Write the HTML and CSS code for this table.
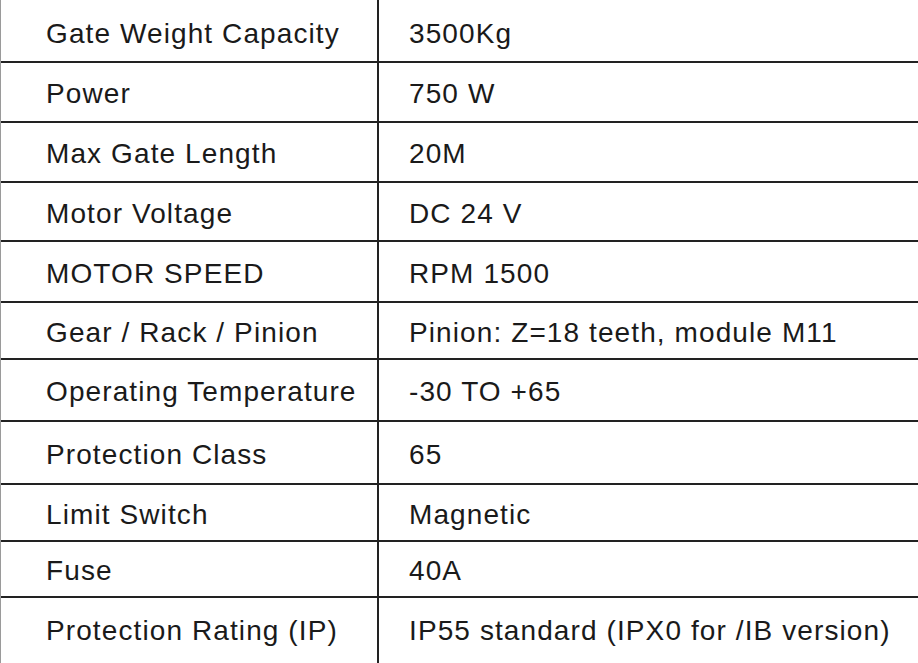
FILE: index.html
```html
<!DOCTYPE html>
<html lang="en">
<head>
<meta charset="utf-8">
<title>Specifications</title>
<link rel="stylesheet" href="styles.css">
</head>
<body>
<div class="spec">
  <div class="row"><div class="k">Gate Weight Capacity</div><div class="v">3500Kg</div></div>
  <div class="row"><div class="k">Power</div><div class="v">750 W</div></div>
  <div class="row"><div class="k">Max Gate Length</div><div class="v">20M</div></div>
  <div class="row"><div class="k">Motor Voltage</div><div class="v">DC 24 V</div></div>
  <div class="row"><div class="k">MOTOR SPEED</div><div class="v">RPM 1500</div></div>
  <div class="row"><div class="k">Gear / Rack / Pinion</div><div class="v">Pinion: Z=18 teeth, module M11</div></div>
  <div class="row"><div class="k">Operating Temperature</div><div class="v">-30 TO +65</div></div>
  <div class="row"><div class="k">Protection Class</div><div class="v">65</div></div>
  <div class="row"><div class="k">Limit Switch</div><div class="v">Magnetic</div></div>
  <div class="row"><div class="k">Fuse</div><div class="v">40A</div></div>
  <div class="row"><div class="k">Protection Rating (IP)</div><div class="v">IP55 standard (IPX0 for /IB version)</div></div>
</div>
</body>
</html>
```
FILE: styles.css
```css
* { box-sizing: border-box; }
html, body { margin: 0; padding: 0; background: #ffffff; }
body { overflow: hidden; }

.spec {
  width: 918px;
  border-left: 1px solid #9a9a9a;
  font-family: "Liberation Sans", Arial, sans-serif;
  font-size: 28px;
  letter-spacing: 1.1px;
  color: #1a1a1a;
}

.row {
  display: grid;
  grid-template-columns: 378px 1fr;
  border-bottom: 2px solid #222222;
  height: 60px;
}

.k, .v {
  display: flex;
  align-items: center;
  padding-top: 4px;
  white-space: nowrap;
}

.k {
  border-right: 2px solid #222222;
  padding-left: 45px;
}

.v {
  padding-left: 30px;
}

.row:nth-child(1) { height: 63px; }
.row:nth-child(1) .k, .row:nth-child(1) .v { padding-top: 7px; }
.row:nth-child(2) { height: 60px; }
.row:nth-child(3) { height: 60px; }
.row:nth-child(4) { height: 59px; }
.row:nth-child(5) { height: 61px; }
.row:nth-child(6) { height: 57px; }
.row:nth-child(7) { height: 62px; }
.row:nth-child(8) { height: 63px; }
.row:nth-child(9) { height: 57px; }
.row:nth-child(10) { height: 56px; }
.row:nth-child(11) { height: 65px; border-bottom: none; }
.row:nth-child(11) .k, .row:nth-child(11) .v { padding-top: 0; }
```
